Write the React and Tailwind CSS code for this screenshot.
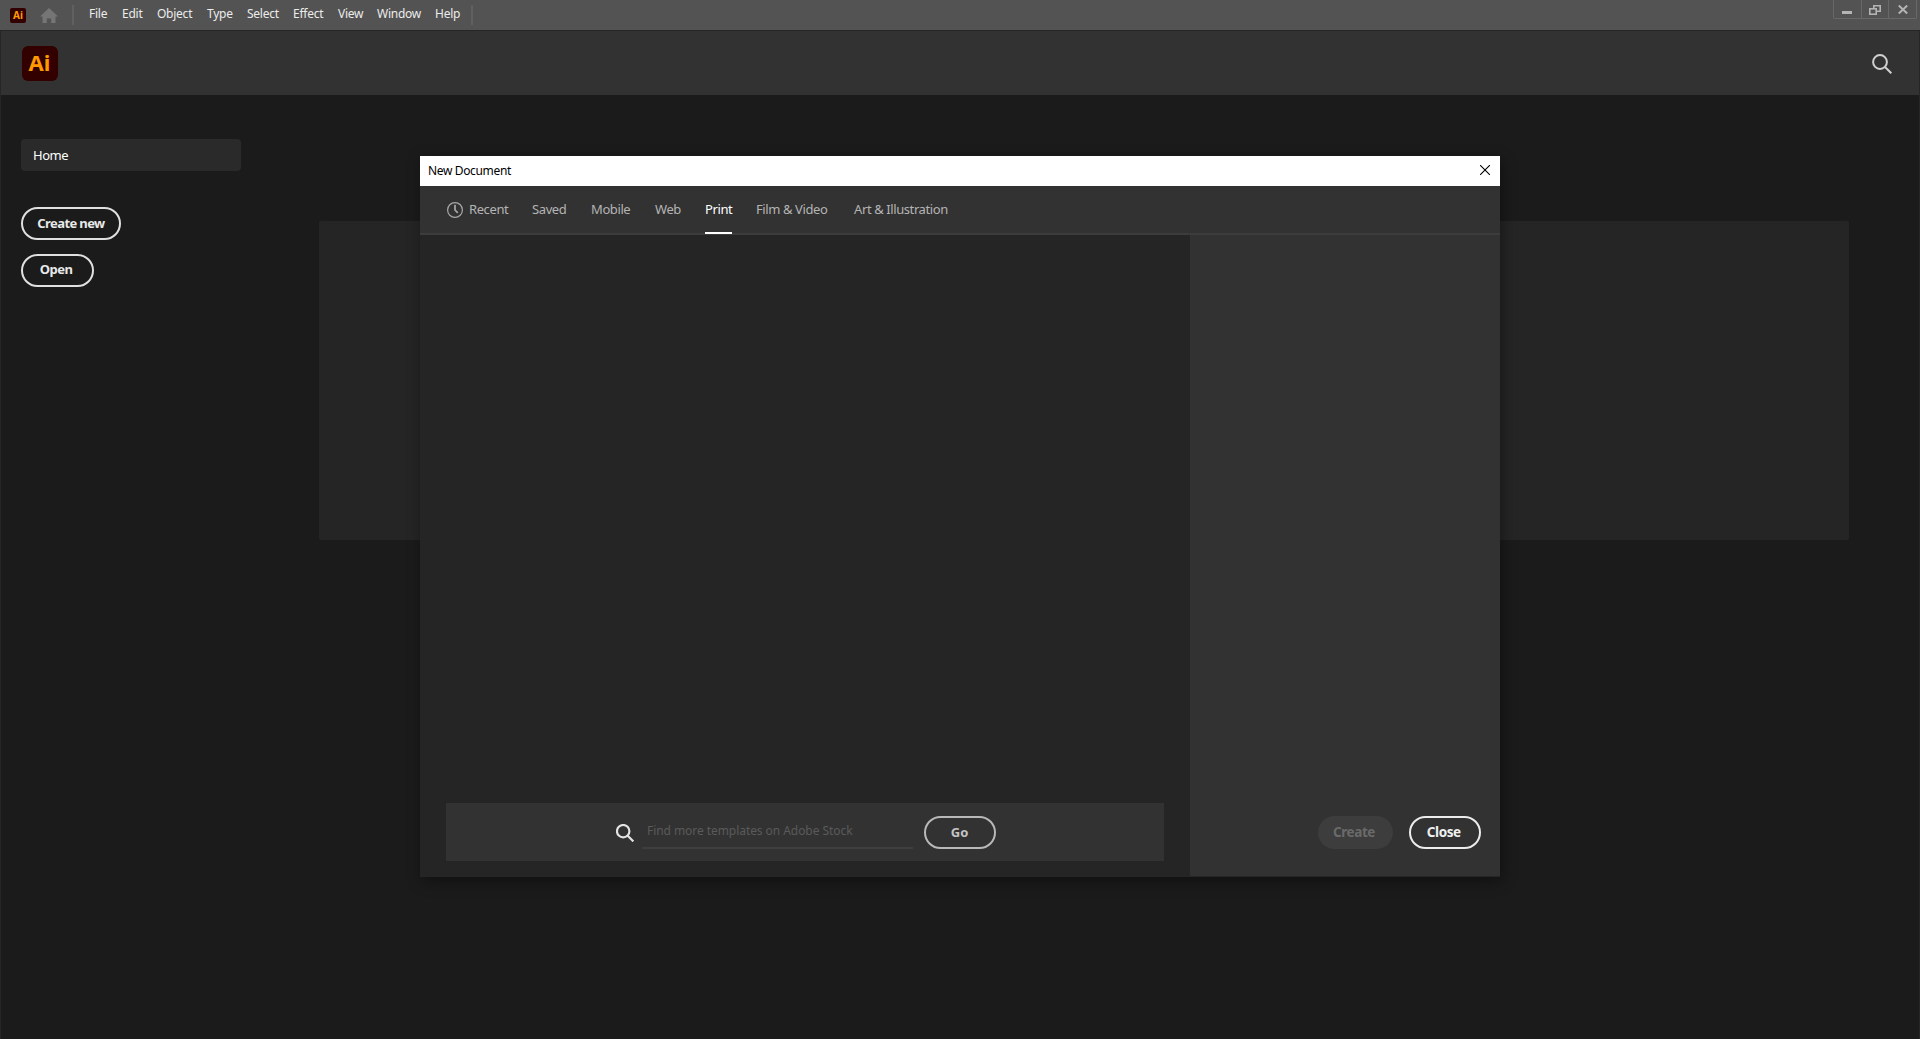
import React from 'react'

const menus = [
  { label: 'File', className: 'w-[33px]' },
  { label: 'Edit', className: 'w-[35px]' },
  { label: 'Object', className: 'w-[50px]' },
  { label: 'Type', className: 'w-[40px]' },
  { label: 'Select', className: 'w-[46px]' },
  { label: 'Effect', className: 'w-[45px]' },
  { label: 'View', className: 'w-[39px]' },
  { label: 'Window', className: 'w-[58px]' },
  { label: 'Help', className: 'w-[36px]' }
]

const tabs = [
  { label: 'Recent', className: 'w-[39px]' },
  { label: 'Saved', className: 'w-[35px]' },
  { label: 'Mobile', className: 'w-[40px]' },
  { label: 'Web', className: 'w-[26px]' },
  { label: 'Print', className: 'w-[27px]', active: true },
  { label: 'Film & Video', className: 'w-[74px]' },
  { label: 'Art & Illustration', className: 'w-[94px]' }
]

function HomeIcon() {
  return (
    <svg className="w-[18px] h-[15px]" viewBox="0 0 18 15" fill="#757575">
      <path d="M9 0 18 8.5H15.5V15H11.2V10.5H6.8V15H2.5V8.5H0Z" />
    </svg>
  )
}

function SearchIcon({ className, strokeWidth }) {
  return (
    <svg className={className} viewBox="0 0 20 20" fill="none" stroke="currentColor" strokeWidth={strokeWidth}>
      <circle cx="8" cy="8" r="6.9" />
      <path d="M13 13 19.3 19.3" />
    </svg>
  )
}

function ClockIcon() {
  return (
    <svg className="w-4 h-4" viewBox="0 0 16 16" fill="none" stroke="#a8a8a8">
      <circle cx="8" cy="8" r="7.4" strokeWidth="1.2" />
      <path d="M8 2.8V8L10.8 10.8" strokeWidth="1.7" />
    </svg>
  )
}

function TitleBar() {
  return (
    <div className="flex h-[31px] shrink-0 bg-[#535353] border-b border-[#262626]">
      <div className="flex items-center h-[30px]">
        <div className="ml-[10px] w-4 h-[15px] rounded-[2px] bg-[#330000] text-[#ff9a00] text-[10px] leading-[14px] font-bold text-center">
          Ai
        </div>
        <div className="ml-[14px] mt-px">
          <HomeIcon />
        </div>
        <div className="ml-[14px] w-[2px] h-5 bg-[#606060]" />
        <div className="ml-[15px] flex text-[12px] leading-4 text-[#ececec] tracking-[-0.25px] whitespace-nowrap -mt-[2px]">
          {menus.map(m => (
            <div key={m.label} className={m.className}>{m.label}</div>
          ))}
        </div>
        <div className="w-[2px] h-5 bg-[#606060]" />
      </div>
      <div className="ml-auto mr-[3px] flex h-[19px] w-[84px] border border-t-0 border-[#686868] rounded-b-[2px]">
        <div className="w-[28px] border-r border-[#686868] flex justify-center">
          <div className="w-[10px] h-[3px] mt-[11px] mr-px bg-[#b4b4b4]" />
        </div>
        <div className="w-[27px] border-r border-[#686868] flex justify-center">
          <svg className="w-3 h-[10px] mt-[5px]" viewBox="0 0 12 10" fill="none" stroke="#b4b4b4" strokeWidth="1.6">
            <path d="M4.8 3V.8H11.2V6.2H8" />
            <rect x=".8" y="3.8" width="6.4" height="5.4" />
          </svg>
        </div>
        <div className="flex-1 flex justify-center">
          <svg className="w-[10px] h-[9px] mt-[5px]" viewBox="0 0 10 9" stroke="#b4b4b4" strokeWidth="2">
            <path d="M.8.5 9.2 8.5M9.2.5.8 8.5" />
          </svg>
        </div>
      </div>
    </div>
  )
}

function Sidebar() {
  return (
    <div className="w-[318px] shrink-0 pl-5 pt-[44px] flex flex-col items-start">
      <div className="w-[220px] h-8 rounded-[4px] bg-[#2a2a2a] text-white text-[13px] leading-8 tracking-[-0.5px] pl-3">Home</div>
      <button className="mt-9 w-[100px] h-[33px] rounded-full border-2 border-[#e0e0e0] text-[#e8e8e8] text-[13px] leading-[28px] font-bold whitespace-nowrap tracking-[-0.6px] flex justify-center">
        Create new
      </button>
      <button className="mt-[14px] w-[73px] h-[33px] rounded-full border-2 border-[#e0e0e0] text-[#e8e8e8] text-[13px] leading-[27px] font-bold tracking-[-0.5px] pr-[3px] flex justify-center">
        Open
      </button>
    </div>
  )
}

function NewDocumentDialog() {
  return (
    <div className="absolute left-[420px] top-[156px] w-[1080px] h-[721px] flex flex-col border-b border-[#262626] shadow-[2px_4px_14px_rgba(0,0,0,0.4)]">
      <div className="h-[30px] shrink-0 bg-white flex items-center justify-between pl-2 pr-[10px]">
        <span className="text-[12px] text-black tracking-[-0.35px]">New Document</span>
        <svg className="w-[10px] h-[10px] mb-[2px]" viewBox="0 0 10 10" stroke="#000" strokeWidth="1.1">
          <path d="M0 0 10 10M10 0 0 10" />
        </svg>
      </div>

      <div className="h-[49px] shrink-0 bg-[#323232] border-b-2 border-[#3c3c3c] flex pl-[27px] text-[13px] text-[#b4b4b4] whitespace-nowrap">
        <div className="mt-[15.5px] mr-[6px]">
          <ClockIcon />
        </div>
        <div className="flex gap-6 leading-[46px] tracking-[-0.4px]">
          {tabs.map(t => (
            <div key={t.label} className={`${t.className} h-[48px] ${t.active ? 'text-white border-b-2 border-white' : ''}`}>
              {t.label}
            </div>
          ))}
        </div>
      </div>

      <div className="flex flex-1">
        <div className="w-[770px] bg-[#252525] flex flex-col justify-end pl-[26px] pb-[15px]">
          <div className="w-[718px] h-[58px] bg-[#323232] flex pl-[170px]">
            <SearchIcon className="w-[18px] h-[18px] mt-[21px] text-[#e4e4e4]" strokeWidth={2.4} />
            <div className="ml-2 w-[271px] h-[46px] border-b-2 border-[#3e3e3e] pl-[5px] text-[12px] leading-[56px] tracking-[-0.06px] text-[#5a5a5a] whitespace-nowrap">
              Find more templates on Adobe Stock
            </div>
            <button className="ml-[10.5px] mt-[13px] w-[72px] h-[33px] rounded-full border-2 border-[#b8b8b8] text-[#c4c4c4] text-[13px] leading-[28px] font-bold flex justify-center">
              Go
            </button>
          </div>
        </div>
        <div className="w-[310px] bg-[#323232] flex items-end justify-end gap-4 pr-[19px] pb-[27px] text-[13.5px] leading-[27px] font-bold tracking-[-0.4px]">
          <button className="w-[75px] h-[33px] pr-[2px] rounded-full bg-[#3d3d3d] text-[#6a6a6a]">Create</button>
          <button className="w-[72.5px] h-[33px] pr-[2px] rounded-full border-2 border-[#ececec] text-[#f0f0f0]">Close</button>
        </div>
      </div>
    </div>
  )
}

export default function App() {
  return (
    <div className="relative w-[1920px] h-[1039px] overflow-hidden flex flex-col bg-[#1b1b1b] font-['Noto_Sans','Open_Sans',sans-serif]">
      <TitleBar />
      <div className="flex-1 flex flex-col border-x border-[#262626]">
        <div className="h-16 shrink-0 bg-[#323232] flex items-center justify-between pl-[20.5px] pr-[27px]">
          <div className="w-9 h-[35px] rounded-[6px] bg-[#330000] text-[#ff9a00] text-[22px] leading-[33px] font-bold text-center">
            Ai
          </div>
          <SearchIcon className="w-5 h-5 mt-px text-[#d0d0d0]" strokeWidth={2} />
        </div>
        <div className="flex flex-1">
          <Sidebar />
          <div className="mt-[126px] w-[1530px] h-[319px] bg-[#252525] rounded-[2px]" />
        </div>
      </div>
      <NewDocumentDialog />
    </div>
  )
}
